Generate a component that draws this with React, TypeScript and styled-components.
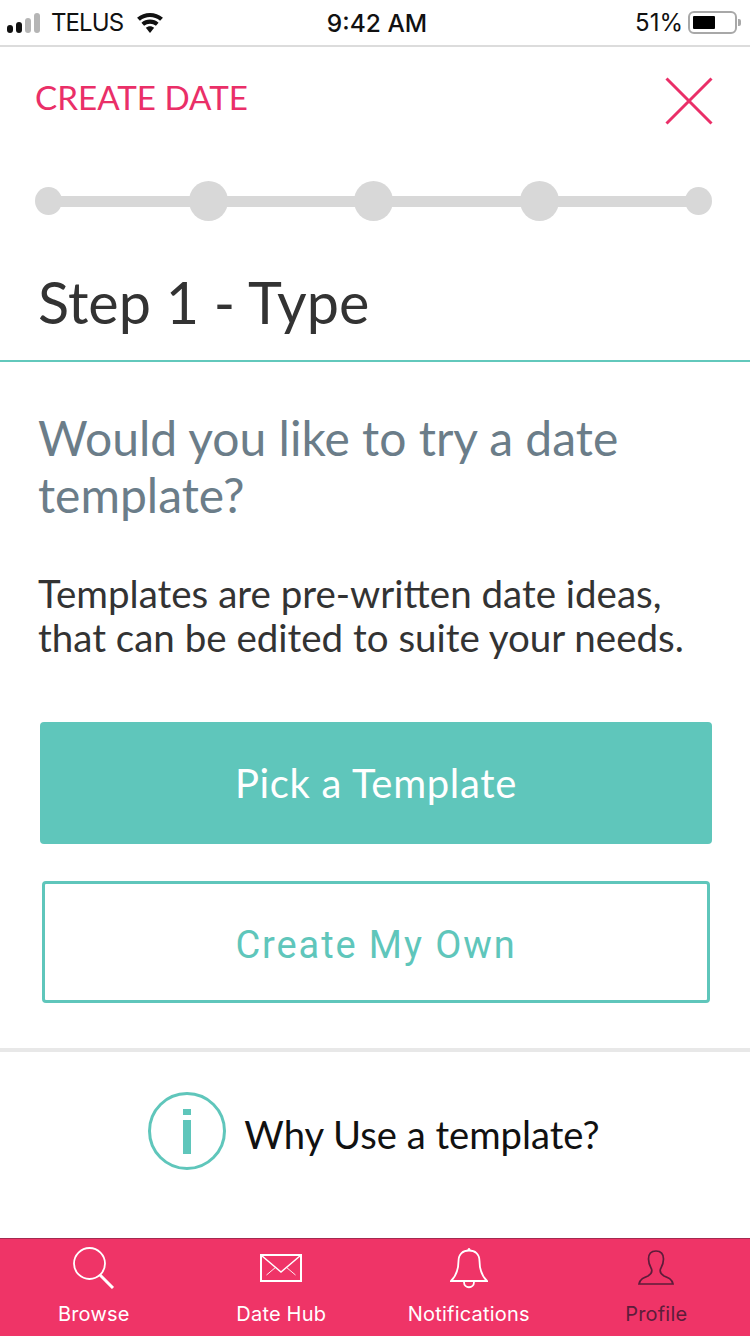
import styled, { createGlobalStyle } from 'styled-components';

const PINK = '#ef3467';
const TEAL = '#5fc6bb';

const GlobalStyle = createGlobalStyle`
  html, body {
    margin: 0;
    padding: 0;
    background: #fff;
  }
  * {
    box-sizing: border-box;
  }
`;

const TABS = [
  { label: 'Browse', icon: <SearchIcon /> },
  { label: 'Date Hub', icon: <MailIcon /> },
  { label: 'Notifications', icon: <BellIcon /> },
  { label: 'Profile', icon: <PersonIcon />, active: true },
];

function SearchIcon() {
  return (
    <svg width="42" height="42" viewBox="0 0 42 42" fill="none" stroke="#fff">
      <circle cx="16.5" cy="16.5" r="15.5" strokeWidth="1.8" />
      <path d="M27 28 L40 41" strokeWidth="3" />
    </svg>
  );
}

function MailIcon() {
  return (
    <svg width="42" height="28" viewBox="0 0 42 28" fill="none" stroke="#fff">
      <rect x="1" y="1" width="40" height="26" strokeWidth="2" />
      <path d="M1.5 1.5 L21 18 L40.5 1.5" strokeWidth="1.5" />
      <path d="M6.5 21 L16 13 M35.5 21 L26 13" strokeWidth="0.9" />
    </svg>
  );
}

function BellIcon() {
  return (
    <svg width="38" height="42" viewBox="0 0 38 42" fill="none" stroke="#fff" strokeWidth="1.8">
      <path d="M1 34 C6 29 8.5 22 8.5 14 C8.5 7 13 3.5 19 3.5 C25 3.5 29.5 7 29.5 14 C29.5 22 32 29 37 34 Z" />
      <circle cx="19" cy="2.5" r="1" fill="#fff" strokeWidth="1" />
      <path d="M14 35 C14 42 24 42 24 35" />
    </svg>
  );
}

function PersonIcon() {
  return (
    <svg width="36" height="35" viewBox="0 0 36 35" fill="none" stroke="#5d1c3a" strokeWidth="1.7">
      <path d="M18 1 C13 1 10.5 4 10.5 9 C10.5 14 12.5 17 13.5 19 C14.5 22 13.5 24 10 26 C6 27.5 2 29 1 34 L35 34 C34 29 30 27.5 26 26 C22.5 24 21.5 22 22.5 19 C23.5 17 25.5 14 25.5 9 C25.5 4 23 1 18 1 Z" />
    </svg>
  );
}

export default function App() {
  return (
    <Page>
      <GlobalStyle />
      <StatusBar>
        <StatusLeft>
          <SignalBars>
            <SignalBar $height={8} />
            <SignalBar $height={11} />
            <SignalBar $height={15} $off />
            <SignalBar $height={20} $off />
          </SignalBars>
          <Carrier>TELUS</Carrier>
          <svg width="28" height="20" viewBox="0 0 28 21" fill="#111">
            <path d="M14 21 L9.6 15.6 C12 13.4 16 13.4 18.4 15.6 Z" />
            <path d="M7.8 13.5 L5 10.2 C9.8 5.8 18.2 5.8 23 10.2 L20.2 13.5 C16.6 10.4 11.4 10.4 7.8 13.5 Z" />
            <path d="M3.4 8.2 L0.4 5 C8 -1.6 20 -1.6 27.6 5 L24.6 8.2 C18.4 3 9.6 3 3.4 8.2 Z" />
          </svg>
        </StatusLeft>
        <Clock>9:42 AM</Clock>
        <StatusRight>
          <span>51%</span>
          <Battery>
            <BatteryLevel />
          </Battery>
          <BatteryCap />
        </StatusRight>
      </StatusBar>

      <TitleRow>
        <ScreenTitle>CREATE DATE</ScreenTitle>
        <svg width="48" height="48" viewBox="0 0 48 48" stroke="#ea2f68" strokeWidth="3">
          <path d="M1.5 1.5 L46.5 46.5 M46.5 1.5 L1.5 46.5" />
        </svg>
      </TitleRow>

      <Stepper>
        <StepDot />
        <StepLine />
        <StepDot $large />
        <StepLine />
        <StepDot $large />
        <StepLine />
        <StepDot $large />
        <StepLine />
        <StepDot />
      </Stepper>

      <StepTitle>Step 1 - Type</StepTitle>

      <Content>
        <Question>Would you like to try a date template?</Question>
        <Description>
          Templates are pre-written date ideas,
          <br />
          that can be edited to suite your needs.
        </Description>
        <PrimaryButton>Pick a Template</PrimaryButton>
        <SecondaryButton>Create My Own</SecondaryButton>
      </Content>

      <InfoRow>
        <InfoCircle>
          <InfoDot />
          <InfoStem />
        </InfoCircle>
        <InfoText>Why Use a template?</InfoText>
      </InfoRow>

      <TabBar>
        {TABS.map((tab) => (
          <Tab key={tab.label} $active={tab.active}>
            <TabIcon>{tab.icon}</TabIcon>
            {tab.label}
          </Tab>
        ))}
      </TabBar>
    </Page>
  );
}

const Page = styled.div`
  width: 750px;
  height: 1336px;
  display: flex;
  flex-direction: column;
  overflow: hidden;
  background: #fff;
  font-family: Lato, 'Liberation Sans', sans-serif;
`;

const StatusBar = styled.div`
  height: 47px;
  flex: none;
  display: grid;
  grid-template-columns: 1fr auto 1fr;
  align-items: center;
  padding: 0 9px 0 7px;
  border-bottom: 2px solid #dcdcdc;
  font-family: Inter, 'Liberation Sans', sans-serif;
  font-size: 24px;
  color: #111;
`;

const StatusLeft = styled.div`
  display: flex;
  align-items: center;
`;

const SignalBars = styled.div`
  display: flex;
  align-items: flex-end;
  gap: 3px;
  margin-right: 11px;
  height: 20px;
`;

const SignalBar = styled.div<{ $height: number; $off?: boolean }>`
  width: 6px;
  height: ${(props) => props.$height}px;
  border-radius: 3px;
  background: ${(props) => (props.$off ? '#b5b5b5' : '#111')};
`;

const Carrier = styled.span`
  margin-right: 13px;
  letter-spacing: -0.9px;
`;

const Clock = styled.span`
  font-size: 24.5px;
  font-weight: 500;
  margin-left: 6px;
`;

const StatusRight = styled.div`
  display: flex;
  align-items: center;
  justify-content: flex-end;
`;

const Battery = styled.div`
  width: 49px;
  height: 23px;
  margin-left: 5px;
  padding: 3px;
  border: 2px solid #a8a8a8;
  border-radius: 6px;
`;

const BatteryLevel = styled.div`
  width: 22px;
  height: 100%;
  background: #000;
  border-radius: 1px;
`;

const BatteryCap = styled.div`
  width: 3px;
  height: 7px;
  margin-left: 1px;
  background: #a8a8a8;
  border-radius: 0 2px 2px 0;
`;

const TitleRow = styled.div`
  flex: none;
  display: flex;
  justify-content: space-between;
  align-items: center;
  height: 52px;
  margin-top: 28px;
  padding: 0 37px 0 35px;
`;

const ScreenTitle = styled.h1`
  margin: 0 0 8px;
  font-size: 33.2px;
  font-weight: 400;
  color: #ea2f68;
`;

const Stepper = styled.div`
  flex: none;
  display: flex;
  align-items: center;
  height: 40px;
  margin: 54px 38px 0 35px;
`;

const StepDot = styled.div<{ $large?: boolean }>`
  flex: none;
  width: ${(props) => (props.$large ? 39 : 27)}px;
  height: ${(props) => (props.$large ? 40 : 28)}px;
  border-radius: 50%;
  background: #d8d8d8;
`;

const StepLine = styled.div`
  flex: 1;
  height: 11px;
  margin: 0 -2px;
  background: #d8d8d8;
`;

const StepTitle = styled.h2`
  flex: none;
  margin: 0;
  height: 141px;
  padding: 51px 0 0 38px;
  border-bottom: 2px solid #62c8bc;
  font-size: 57.5px;
  line-height: 60px;
  font-weight: 400;
  color: #333;
`;

const Content = styled.div`
  flex: none;
  height: 690px;
  display: flex;
  flex-direction: column;
  align-items: center;
  padding: 47px 0 0 2px;
  border-bottom: 4px solid #e8e8e8;
`;

const Question = styled.h3`
  align-self: stretch;
  margin: 0;
  padding: 0 80px 0 36px;
  font-size: 48px;
  line-height: 57px;
  font-weight: 400;
  color: #6b7d89;
`;

const Description = styled.p`
  align-self: stretch;
  margin: 48px 0 0;
  padding-left: 36px;
  font-size: 38.5px;
  line-height: 44px;
  color: #333;
`;

const PrimaryButton = styled.button`
  width: 672px;
  height: 122px;
  margin-top: 63px;
  border: none;
  border-radius: 4px;
  background: ${TEAL};
  color: #fff;
  font-family: Lato, sans-serif;
  font-size: 40px;
  letter-spacing: 0.7px;
`;

const SecondaryButton = styled.button`
  width: 668px;
  height: 122px;
  margin-top: 37px;
  padding-top: 6px;
  border: 3px solid ${TEAL};
  border-radius: 4px;
  background: #fff;
  color: ${TEAL};
  font-family: Roboto, sans-serif;
  font-size: 38px;
  letter-spacing: 1.9px;
`;

const InfoRow = styled.div`
  flex: none;
  height: 186px;
  display: flex;
  align-items: center;
  justify-content: center;
  gap: 18px;
  padding: 0 2px 28px 0;
`;

const InfoCircle = styled.div`
  width: 78px;
  height: 78px;
  display: flex;
  flex-direction: column;
  align-items: center;
  justify-content: center;
  gap: 5px;
  border: 3px solid ${TEAL};
  border-radius: 50%;
`;

const InfoDot = styled.div`
  width: 8px;
  height: 6px;
  background: ${TEAL};
`;

const InfoStem = styled.div`
  width: 8px;
  height: 34px;
  background: ${TEAL};
`;

const InfoText = styled.span`
  padding-top: 5px;
  font-size: 38.2px;
  color: #111;
`;

const TabBar = styled.nav`
  flex: 1;
  display: grid;
  grid-template-columns: repeat(4, 1fr);
  border-top: 1px solid #a52a50;
  background: ${PINK};
`;

const Tab = styled.div<{ $active?: boolean }>`
  display: flex;
  flex-direction: column;
  align-items: center;
  font-family: Inter, Roboto, sans-serif;
  font-size: 20px;
  letter-spacing: 0.2px;
  color: ${(props) => (props.$active ? '#5d1c3a' : '#fff')};
`;

const TabIcon = styled.div`
  height: 53px;
  margin-top: 2px;
  margin-bottom: 8px;
  display: flex;
  align-items: center;
`;
